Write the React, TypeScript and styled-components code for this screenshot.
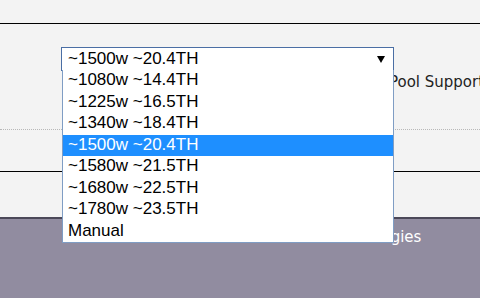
import { FC } from "react";
import styled, { createGlobalStyle } from "styled-components";

const OPTIONS = [
	"~1080w ~14.4TH",
	"~1225w ~16.5TH",
	"~1340w ~18.4TH",
	"~1500w ~20.4TH",
	"~1580w ~21.5TH",
	"~1680w ~22.5TH",
	"~1780w ~23.5TH",
	"Manual",
];

const SELECTED = "~1500w ~20.4TH";

const GlobalStyle = createGlobalStyle`
	* {
		box-sizing: border-box;
	}

	html,
	body {
		margin: 0;
		padding: 0;
		background-color: #f3f3f3;
		font-family: "DejaVu Sans", Verdana, sans-serif;
		overflow: hidden;
	}
`;

const App: FC = () => {
	return (
		<Page>
			<GlobalStyle />
			<Header />

			<Form>
				<SelectRow>
					<SelectWrap>
						<Select>
							<SelectValue>{SELECTED}</SelectValue>
							<Arrow />
						</Select>

						<Dropdown>
							{OPTIONS.map((option) => (
								<Option key={option} $active={option === SELECTED}>
									{option}
								</Option>
							))}
						</Dropdown>
					</SelectWrap>
				</SelectRow>

				<HintRow>Pool Support</HintRow>
			</Form>

			<Divider />
			<Spacer />

			<Footer>
				<FooterText>Technologies</FooterText>
			</Footer>
		</Page>
	);
};

export default App;

const Page = styled.div`
	width: 480px;
	height: 298px;
	display: flex;
	flex-direction: column;
	overflow: hidden;
`;

const Header = styled.div`
	height: 24px;
	flex-shrink: 0;
	border-bottom: 1px solid #000;
`;

const Form = styled.div`
	height: 106px;
	flex-shrink: 0;
	display: flex;
	flex-direction: column;
	padding-top: 23px;
	border-bottom: 1px dotted #b8b8b8;
`;

const SelectRow = styled.div`
	display: flex;
	padding-left: 61px;
`;

const SelectWrap = styled.div`
	position: relative;
	z-index: 2;
`;

const Select = styled.div`
	width: 333px;
	height: 24px;
	display: flex;
	align-items: center;
	justify-content: space-between;
	padding: 0 8px 0 6px;
	border: 1px solid #4a6ea4;
	background-color: #fff;
	font-family: "Liberation Sans", Arial, sans-serif;
	font-size: 17px;
	color: #000;
`;

const SelectValue = styled.span`
	line-height: 22px;
`;

const Arrow = styled.span`
	width: 0;
	height: 0;
	border-left: 4px solid transparent;
	border-right: 4px solid transparent;
	border-top: 7px solid #000;
`;

const Dropdown = styled.ul`
	position: absolute;
	top: 23px;
	left: 1px;
	width: 332px;
	margin: 0;
	padding: 0;
	list-style: none;
	background-color: #fff;
	border: 1px solid #7f9dc4;
	border-top: none;
`;

const Option = styled.li<{ $active: boolean }>`
	height: 21.5px;
	line-height: 20px;
	padding-left: 5px;
	font-family: "Liberation Sans", Arial, sans-serif;
	font-size: 17px;
	white-space: nowrap;
	color: ${({ $active }) => ($active ? "#fff" : "#000")};
	background-color: ${({ $active }) => ($active ? "#1e8fff" : "#fff")};
`;

const HintRow = styled.div`
	padding-left: 389px;
	margin-top: 1px;
	font-size: 15px;
	line-height: 20px;
	color: #222;
	white-space: nowrap;
`;

const Divider = styled.div`
	height: 42px;
	flex-shrink: 0;
	border-bottom: 1px solid #000;
`;

const Spacer = styled.div`
	height: 45px;
	flex-shrink: 0;
`;

const Footer = styled.div`
	flex: 1;
	border-top: 2px solid #4b4858;
	background-color: #918ca0;
	padding: 8px 0 0 325px;
`;

const FooterText = styled.span`
	font-size: 15px;
	line-height: 20px;
	color: #fff;
	white-space: nowrap;
`;
